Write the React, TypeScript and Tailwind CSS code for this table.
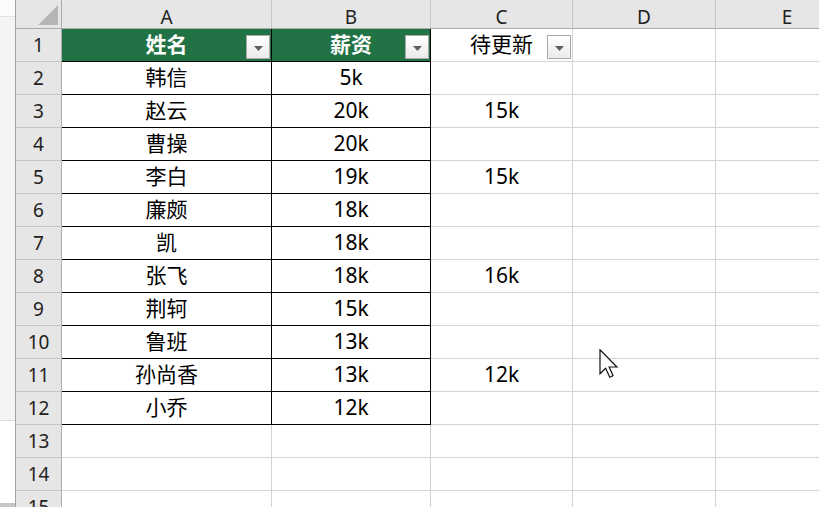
import React from "react";

const font = { fontFamily: '"Noto Sans", "Noto Sans CJK SC", sans-serif' };

const rows = [
  { name: "韩信", pay: "5k", todo: "" },
  { name: "赵云", pay: "20k", todo: "15k" },
  { name: "曹操", pay: "20k", todo: "" },
  { name: "李白", pay: "19k", todo: "15k" },
  { name: "廉颇", pay: "18k", todo: "" },
  { name: "凯", pay: "18k", todo: "" },
  { name: "张飞", pay: "18k", todo: "16k" },
  { name: "荆轲", pay: "15k", todo: "" },
  { name: "鲁班", pay: "13k", todo: "" },
  { name: "孙尚香", pay: "13k", todo: "12k" },
  { name: "小乔", pay: "12k", todo: "" },
];

function FilterButton() {
  return (
    <div className="absolute right-[1px] bottom-[2px] w-[24px] h-[24px] border border-[#a9a9a9] bg-gradient-to-b from-white to-[#ebebeb] flex items-center justify-center">
      <svg width="9" height="5" viewBox="0 0 9 5" className="mt-[2px]">
        <path d="M0 0 L9 0 L4.5 5 Z" fill="#5f5f5f" />
      </svg>
    </div>
  );
}

function RowHead({ n }: { n: number }) {
  return (
    <div className="w-[46px] h-full shrink-0 bg-[#e6e6e6] border-r border-b border-r-[#ababab] border-b-[#c6c6c6] flex items-center justify-center text-[19px] text-[#222]">
      {n}
    </div>
  );
}

function Cell({ w, text, black, grow }: { w?: string; text?: string; black?: boolean; grow?: boolean }) {
  return (
    <div
      className={`${grow ? "flex-1" : w} h-full shrink-0 border-r border-b flex items-center justify-center text-[21px] text-black ${
        black ? "border-black" : "border-[#d4d4d4]"
      }`}
    >
      {text}
    </div>
  );
}

export default function App() {
  return (
    <div className="relative w-[819px] h-[507px] overflow-hidden bg-white flex" style={font}>
      {/* side strip */}
      <div className="w-[16px] shrink-0 border-r border-[#a3a3a3] flex flex-col">
        <div className="h-[17px] bg-[#fbfbfb] border-b border-[#e2e2e2]" />
        <div className="h-[404px] bg-[#f4f4f4] border-b border-[#dcdcdc]" />
        <div className="flex-1 bg-white" />
        <div className="h-[4px] bg-[#c6c6c6]" />
      </div>

      <div className="flex-1 flex flex-col">
        {/* column header */}
        <div className="h-[29px] shrink-0 flex bg-[#e6e6e6] border-b border-[#ababab] text-[19px] text-[#222]">
          <div className="w-[46px] shrink-0 border-r border-[#ababab] flex items-end justify-end pr-[3px] pb-[3px]">
            <svg width="20" height="20" viewBox="0 0 20 20">
              <path d="M20 0 L20 20 L0 20 Z" fill="#b5b5b5" />
            </svg>
          </div>
          <div className="w-[210px] shrink-0 border-r border-[#c6c6c6] flex items-center justify-center pt-[6px]">A</div>
          <div className="w-[159px] shrink-0 border-r border-[#c6c6c6] flex items-center justify-center pt-[6px]">B</div>
          <div className="w-[142px] shrink-0 border-r border-[#c6c6c6] flex items-center justify-center pt-[6px]">C</div>
          <div className="w-[143px] shrink-0 border-r border-[#c6c6c6] flex items-center justify-center pt-[6px]">D</div>
          <div className="w-[142px] shrink-0 flex items-center justify-center pt-[6px]">E</div>
        </div>

        {/* row 1: table header */}
        <div className="h-[33px] shrink-0 flex">
          <RowHead n={1} />
          <div className="relative w-[210px] h-full shrink-0 bg-[#217346] border-r border-b border-black flex items-center justify-center text-[21px] text-white font-bold">
            姓名
            <FilterButton />
          </div>
          <div className="relative w-[159px] h-full shrink-0 bg-[#217346] border-r border-b border-black flex items-center justify-center text-[21px] text-white font-bold">
            薪资
            <FilterButton />
          </div>
          <div className="relative w-[142px] h-full shrink-0 border-r border-b border-[#d4d4d4] flex items-center justify-center text-[21px] text-black">
            待更新
            <FilterButton />
          </div>
          <Cell w="w-[143px]" />
          <Cell grow />
        </div>

        {rows.map((r, i) => (
          <div key={r.name} className="h-[33px] shrink-0 flex">
            <RowHead n={i + 2} />
            <Cell w="w-[210px]" text={r.name} black />
            <Cell w="w-[159px]" text={r.pay} black />
            <Cell w="w-[142px]" text={r.todo} />
            <Cell w="w-[143px]" />
            <Cell grow />
          </div>
        ))}

        {[13, 14, 15].map((n) => (
          <div key={n} className="h-[33px] shrink-0 flex">
            <RowHead n={n} />
            <Cell w="w-[210px]" />
            <Cell w="w-[159px]" />
            <Cell w="w-[142px]" />
            <Cell w="w-[143px]" />
            <Cell grow />
          </div>
        ))}
      </div>

      {/* mouse pointer */}
      <svg className="absolute left-[599px] top-[349px]" width="20" height="30" viewBox="0 0 13 20">
        <path d="M0.5 0.5 L0.5 16.5 L4.3 12.8 L7 18.8 L9.2 17.8 L6.6 12 L11.8 12 Z" fill="white" stroke="#111" strokeWidth="0.8" strokeLinejoin="miter" />
      </svg>
    </div>
  );
}
